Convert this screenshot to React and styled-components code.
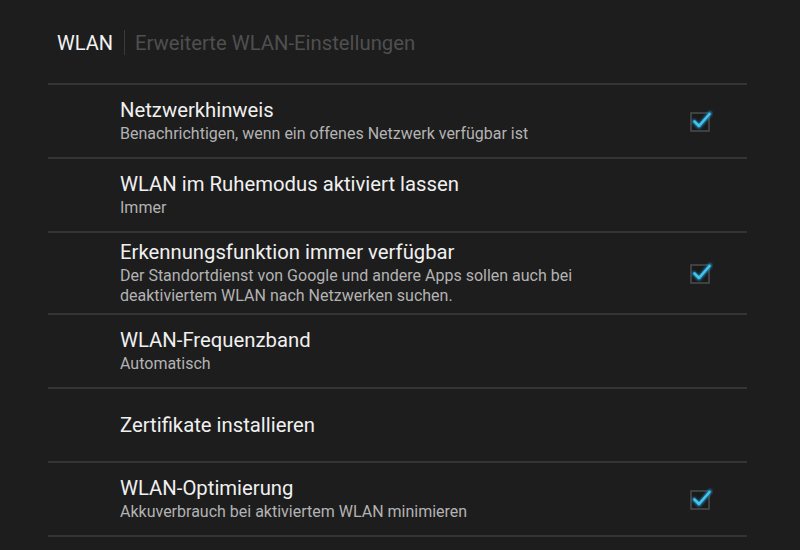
import React from 'react';
import styled, { createGlobalStyle } from 'styled-components';

const Global = createGlobalStyle`
    html, body {
        margin: 0;
        padding: 0;
        background: #1d1d1d;
    }
    body {
        font-family: Roboto, "Noto Sans", sans-serif;
        width: 800px;
        height: 550px;
        overflow: hidden;
    }
`;

const Screen = styled.div`
    width: 800px;
    height: 550px;
    background: #1d1d1d;
`;

const ActionBar = styled.div`
    height: 83px;
    display: flex;
    align-items: center;
    padding-left: 57px;
    box-sizing: border-box;
    padding-top: 2px;
`;

const BarTitle = styled.span`
    font-size: 20px;
    color: #f2f2f2;
`;

const BarDivider = styled.span`
    width: 1px;
    height: 25px;
    background: #3a3a3a;
    margin: 0 10px 0 11px;
`;

const BarSubtitle = styled.span`
    font-size: 20.3px;
    color: #4f4f4f;
`;

const List = styled.div`
    margin: 0 53px 0 48px;
    border-bottom: 2px solid #343434;
`;

const Row = styled.div`
    display: flex;
    align-items: center;
    min-height: ${p => (p.$tall ? 80 : 72)}px;
    border-top: 2px solid #343434;
    padding: 0 34px 0 72px;
`;

const Texts = styled.div`
    flex: 1;
    display: flex;
    flex-direction: column;
    gap: 2px;
`;

const Title = styled.div`
    font-size: 20.3px;
    line-height: 24px;
    color: #f0f0f0;
`;

const Summary = styled.div`
    font-size: 16px;
    line-height: 20px;
    color: #b3b3b3;
    max-width: 470px;
`;

const BoxWrap = styled.div`
    width: 24px;
    height: 24px;
    margin-left: 16px;
    margin-top: -2px;
`;

const CheckBox = () => (
    <BoxWrap>
        <svg width="24" height="24" viewBox="0 0 24 24">
            <defs>
                <filter id="glow" x="-50%" y="-50%" width="200%" height="200%">
                    <feGaussianBlur stdDeviation="1.1" />
                </filter>
            </defs>
            <rect x="2" y="5" width="18" height="18" fill="#1a1a1a" stroke="#4a4a4a" strokeWidth="1.6" />
            <path d="M5 13.5 L10 18.5 L21 5.5" fill="none" stroke="#1f8fc0" strokeWidth="4.5" strokeLinecap="round" strokeLinejoin="round" filter="url(#glow)" opacity="0.8" />
            <path d="M5.5 13.5 L10 18 L20.5 6" fill="none" stroke="#45c2ee" strokeWidth="2.6" strokeLinecap="round" strokeLinejoin="round" />
        </svg>
    </BoxWrap>
);

const items = [
    { title: 'Netzwerkhinweis', summary: 'Benachrichtigen, wenn ein offenes Netzwerk verfügbar ist', checked: true },
    { title: 'WLAN im Ruhemodus aktiviert lassen', summary: 'Immer' },
    { title: 'Erkennungsfunktion immer verfügbar', summary: 'Der Standortdienst von Google und andere Apps sollen auch bei deaktiviertem WLAN nach Netzwerken suchen.', checked: true, tall: true },
    { title: 'WLAN-Frequenzband', summary: 'Automatisch' },
    { title: 'Zertifikate installieren' },
    { title: 'WLAN-Optimierung', summary: 'Akkuverbrauch bei aktiviertem WLAN minimieren', checked: true },
];

const App = () => (
    <Screen>
        <Global />
        <ActionBar>
            <BarTitle>WLAN</BarTitle>
            <BarDivider />
            <BarSubtitle>Erweiterte WLAN-Einstellungen</BarSubtitle>
        </ActionBar>
        <List>
            {items.map(item => (
                <Row key={item.title} $tall={item.tall}>
                    <Texts>
                        <Title>{item.title}</Title>
                        {item.summary && <Summary>{item.summary}</Summary>}
                    </Texts>
                    {item.checked && <CheckBox />}
                </Row>
            ))}
        </List>
    </Screen>
);

export default App;
